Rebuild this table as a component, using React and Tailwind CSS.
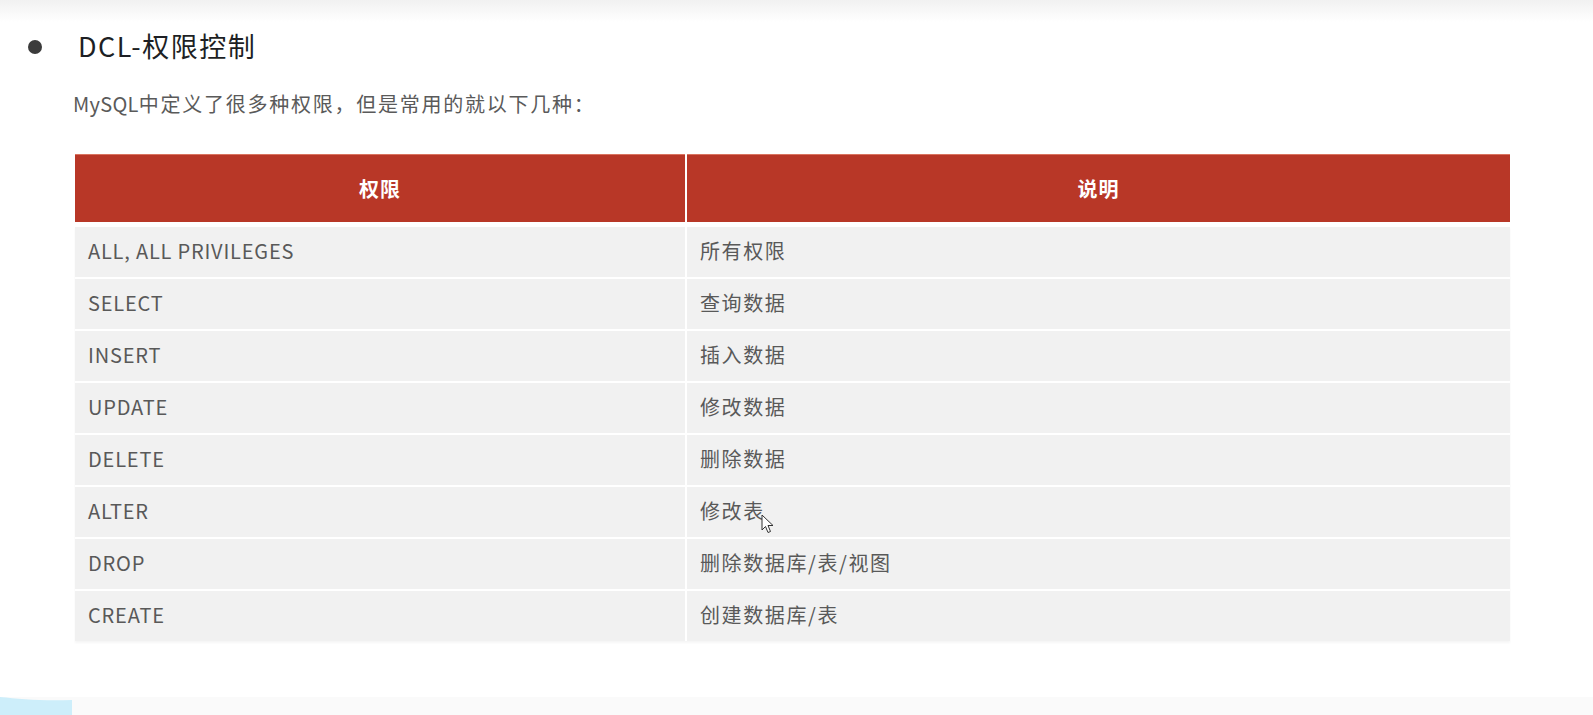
import React from 'react';

const ROWS = [
    ['ALL, ALL PRIVILEGES', '所有权限'],
    ['SELECT', '查询数据'],
    ['INSERT', '插入数据'],
    ['UPDATE', '修改数据'],
    ['DELETE', '删除数据'],
    ['ALTER', '修改表'],
    ['DROP', '删除数据库/表/视图'],
    ['CREATE', '创建数据库/表'],
];

const Cursor = () => (
    <svg width="13" height="20" viewBox="0 0 13 20" className="absolute left-[761px] top-[514px]">
        <path d="M1 1 L1 16 L4.5 12.5 L7 18.5 L9.5 17.5 L7 11.5 L12 11.5 Z" fill="white" stroke="#333" strokeWidth="1" strokeLinejoin="round" />
    </svg>
);

const App = () => {
    return (
        <div className="relative w-[1593px] h-[715px] bg-white overflow-hidden flex flex-col font-['Noto_Sans_CJK_SC',sans-serif]">
            {/* top band */}
            <div className="h-[22px] bg-gradient-to-b from-[#f1f1f1] to-white" />

            {/* title */}
            <div className="h-[46px] flex items-center pl-[28px]">
                <span className="w-[14px] h-[14px] rounded-full bg-[#3b3b3b] mt-[4px]" />
                <h1 className="ml-[36px] text-[27px] leading-none text-[#1d1f24] tracking-[1.5px]">DCL-权限控制</h1>
            </div>

            <p className="mt-[22px] ml-[73px] text-[20px] leading-[28px] text-[#5a5a5a]">
                <span className="tracking-[0.3px]">MySQL</span>
                <span className="tracking-[1.75px]">中定义了很多种权限，但是常用的就以下几种：</span>
            </p>

            {/* table */}
            <div className="mt-[36px] ml-[75px] w-[1435px] flex flex-col">
                <div className="grid grid-cols-[610px_823px] gap-x-[2px] h-[68px] mb-[5px]">
                    <div className="bg-[#b83727] border-t border-[#d9735f] flex items-center justify-center text-white text-[20px] font-bold tracking-[1px]">权限</div>
                    <div className="bg-[#b83727] border-t border-[#d9735f] flex items-center justify-center text-white text-[20px] font-bold tracking-[1px]">说明</div>
                </div>
                <div className="flex flex-col gap-y-[2px] shadow-[0_2px_2px_rgba(0,0,0,0.04)]">
                    {ROWS.map(([name, desc]) => (
                        <div key={name} className="grid grid-cols-[610px_823px] gap-x-[2px] h-[50px] text-[20px] text-[#595959]">
                            <div className="bg-[#f1f1f1] flex items-center pl-[13px] pb-[3px] tracking-[0.8px]">{name}</div>
                            <div className="bg-[#f1f1f1] flex items-center pl-[13px] pb-[3px] tracking-[1.6px]">{desc}</div>
                        </div>
                    ))}
                </div>
            </div>

            <div className="flex-1" />

            {/* bottom strip */}
            <div className="h-[18px] bg-[#fafafa] flex">
                <svg width="72" height="18" viewBox="0 0 72 18">
                    <path d="M0 0 C20 2 40 4 72 3 L72 18 L0 18 Z" fill="#cdeefa" />
                </svg>
            </div>

            <Cursor />
        </div>
    );
};

export default App;
